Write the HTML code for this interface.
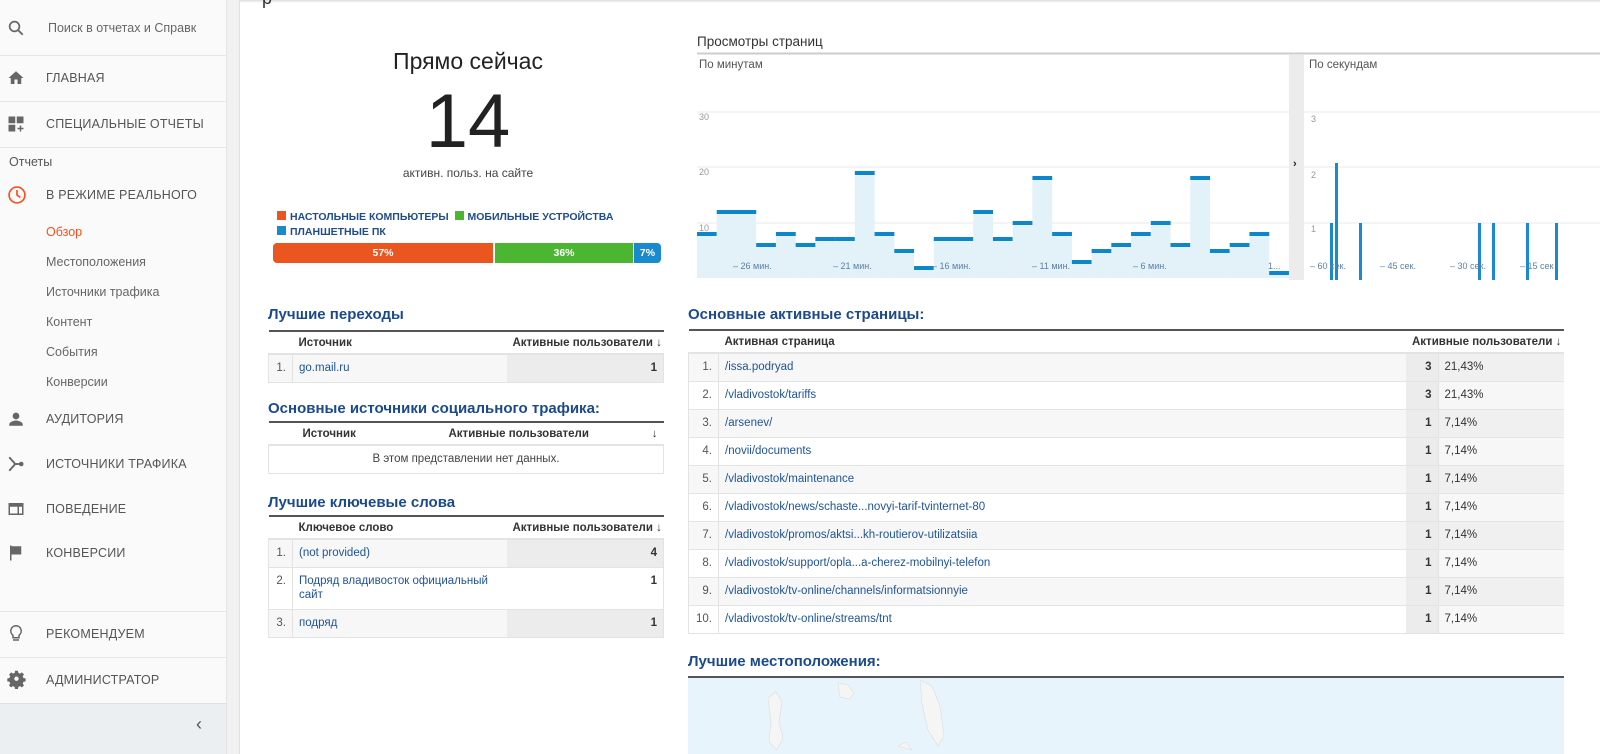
<!DOCTYPE html>
<html><head><meta charset="utf-8"><style>
*{margin:0;padding:0;box-sizing:border-box}
body{width:1600px;height:754px;overflow:hidden;background:#fff;font-family:"Liberation Sans",Roboto,sans-serif;position:relative;color:#333}
.a{position:absolute}
#side{left:0;top:0;width:227px;height:754px;background:#fafafa;border-right:1px solid #e4e4e4}
#strip{left:227px;top:0;width:13px;height:754px;background:#f1f1f1;border-right:1px solid #e0e0e0}
.sep{position:absolute;left:0;width:227px;height:1px;background:#e6e6e6}
.it{position:absolute;left:46px;font-size:12.5px;color:#555;text-transform:uppercase;letter-spacing:.2px;white-space:nowrap}
.sub{position:absolute;left:46px;font-size:12.5px;color:#666;white-space:nowrap}
.ic{position:absolute;left:7px}
h3{position:absolute;font-size:15px;font-weight:bold;color:#1b4a8c;white-space:nowrap}
table{position:absolute;border-collapse:collapse;font-size:11.5px;border-top:2px solid #555;table-layout:fixed}
td{height:28px;border-bottom:1px solid #e3e3e3;padding:0 6px;color:#333;white-space:nowrap;overflow:hidden}
th{height:23px;font-weight:bold;font-size:11.5px;text-align:left;padding:0 6px;border-bottom:2px solid #e3e3e3;white-space:nowrap}
.n{text-align:right;color:#555;border-right:1px solid #e3e3e3;border-left:1px solid #e3e3e3}
.l{color:#1f5397}
.v{background:#ececec;text-align:right;font-weight:bold;border-right:1px solid #e3e3e3}
.g{background:#f7f7f7}
</style></head><body>
<div id="side" class="a">
 <svg class="ic" style="top:19px" width="18" height="18" viewBox="0 0 24 24"><circle cx="10" cy="10" r="6.5" fill="none" stroke="#666" stroke-width="2.3"/><path d="M15 15l6 6" stroke="#666" stroke-width="2.5"/></svg>
 <div class="sub" style="left:48px;top:21px;color:#666">Поиск в отчетах и Справк</div>
 <div class="sep" style="top:55px"></div>
 <svg class="ic" style="top:69px" width="18" height="18" viewBox="0 0 24 24"><path d="M10 20v-6h4v6h5v-8h3L12 3 2 12h3v8z" fill="#666"/></svg>
 <div class="it" style="top:71px">Главная</div>
 <div class="sep" style="top:101px"></div>
 <svg class="ic" style="top:115px" width="18" height="18" viewBox="0 0 24 24"><path d="M2 2h9v9H2zM13 2h9v9h-9zM2 13h9v9H2zM17 14h2v3h3v2h-3v3h-2v-3h-3v-2h3z" fill="#666"/></svg>
 <div class="it" style="top:117px">Специальные отчеты</div>
 <div class="sep" style="top:147px"></div>
 <div class="sub" style="left:9px;top:155px;color:#555">Отчеты</div>
 <svg class="ic" style="top:185px" width="20" height="20" viewBox="0 0 24 24"><circle cx="12" cy="12" r="9.5" fill="none" stroke="#f4511e" stroke-width="2"/><path d="M12 6v6l4 3" fill="none" stroke="#f4511e" stroke-width="2"/></svg>
 <div class="it" style="top:188px">В режиме реального</div>
 <div class="sub" style="top:225px;color:#f4511e">Обзор</div>
 <div class="sub" style="top:255px">Местоположения</div>
 <div class="sub" style="top:285px">Источники трафика</div>
 <div class="sub" style="top:315px">Контент</div>
 <div class="sub" style="top:345px">События</div>
 <div class="sub" style="top:375px">Конверсии</div>
 <svg class="ic" style="top:410px" width="18" height="18" viewBox="0 0 24 24"><circle cx="12" cy="8" r="4.5" fill="#666"/><path d="M3 21v-2c0-3 6-5 9-5s9 2 9 5v2z" fill="#666"/></svg>
 <div class="it" style="top:412px">Аудитория</div>
 <svg class="ic" style="top:455px" width="18" height="18" viewBox="0 0 24 24"><path d="M3 3l8 9-8 9" fill="none" stroke="#666" stroke-width="2.5"/><path d="M10 12h8" stroke="#666" stroke-width="2.5"/><circle cx="19" cy="12" r="3" fill="#666"/></svg>
 <div class="it" style="top:457px">Источники трафика</div>
 <svg class="ic" style="top:500px" width="18" height="18" viewBox="0 0 24 24"><path d="M2 4h20v16H2z M4 9v9h10V9z M16 9v9h4V9z" fill="#666" fill-rule="evenodd"/></svg>
 <div class="it" style="top:502px">Поведение</div>
 <svg class="ic" style="top:544px" width="18" height="18" viewBox="0 0 24 24"><path d="M4 2h2v20H4zM6 3h13v11H6z" fill="#666"/></svg>
 <div class="it" style="top:546px">Конверсии</div>
 <div class="sep" style="top:611px"></div>
 <svg class="ic" style="top:624px" width="18" height="20" viewBox="0 0 24 26"><path d="M12 2a7 7 0 0 0-4 12.7V18h8v-3.3A7 7 0 0 0 12 2z" fill="none" stroke="#666" stroke-width="2"/><path d="M8 21h8" stroke="#666" stroke-width="2"/></svg>
 <div class="it" style="top:627px">Рекомендуем</div>
 <div class="sep" style="top:657px"></div>
 <svg class="ic" style="top:670px" width="19" height="19" viewBox="0 0 24 24"><path fill="#666" fill-rule="evenodd" d="M10 1h4l.6 3 2.3 1 2.6-1.7 2.8 2.8L20.6 8.7l1 2.3 3 .6v4l-3 .6-1 2.3 1.7 2.6-2.8 2.8-2.6-1.7-2.3 1-.6 3h-4l-.6-3-2.3-1-2.6 1.7-2.8-2.8 1.7-2.6-1-2.3-3-.6v-4l3-.6 1-2.3L1.9 6.1 4.7 3.3 7.3 5l2.3-1z M12 9a3 3 0 1 0 0 6 3 3 0 0 0 0-6z" transform="scale(.92) translate(1 0)"/></svg>
 <div class="it" style="top:673px">Администратор</div>
 <div class="a" style="left:0;top:703px;width:226px;height:51px;background:#eceff1;border-top:1px solid #e0e0e0"></div>
 <div class="a" style="left:196px;top:714px;font-size:18px;color:#555">‹</div>
</div>
<div id="strip" class="a"></div>
<div class="a" style="left:240px;top:0;width:1360px;height:3px;background:linear-gradient(#ddd,#fff)"></div>
<div class="a" style="left:262px;top:-12px;font-size:18px;color:#333">р</div>

<div class="a" style="left:268px;top:48px;width:400px;text-align:center;font-size:23px;color:#222">Прямо сейчас</div>
<div class="a" style="left:268px;top:78px;width:400px;text-align:center;font-size:76px;color:#222;font-weight:300">14</div>
<div class="a" style="left:268px;top:166px;width:400px;text-align:center;font-size:12px;color:#444">активн. польз. на сайте</div>
<div class="a" style="left:277px;top:210px;font-size:10.5px;font-weight:bold;color:#1f4c8a;line-height:15px;white-space:nowrap">
<span style="display:inline-block;width:9px;height:9px;background:#eb5620;margin-right:4px"></span>НАСТОЛЬНЫЕ КОМПЬЮТЕРЫ &nbsp;<span style="display:inline-block;width:9px;height:9px;background:#4cb633;margin-right:4px"></span>МОБИЛЬНЫЕ УСТРОЙСТВА<br>
<span style="display:inline-block;width:9px;height:9px;background:#1a8ace;margin-right:4px"></span>ПЛАНШЕТНЫЕ ПК</div>
<div class="a" style="left:273px;top:243px;width:388px;height:20px;display:flex;font-size:10.5px;font-weight:bold;color:#fff;line-height:20px;text-align:center;border-radius:4px;overflow:hidden">
<div style="width:220px;background:#eb5620">57%</div><div style="width:2px"></div><div style="width:138px;background:#4cb633">36%</div><div style="width:1px"></div><div style="width:27px;background:#1a8ace">7%</div></div>

<h3 style="left:268px;top:306px">Лучшие переходы</h3>
<table style="left:268px;top:330px;width:396px">
<colgroup><col style="width:24px"><col><col style="width:157px"></colgroup>
<tr><th></th><th>Источник</th><th style="text-align:right">Активные пользователи ↓</th></tr>
<tr class="g"><td class="n">1.</td><td class="l">go.mail.ru</td><td class="v">1</td></tr></table>

<h3 style="left:268px;top:400px">Основные источники социального трафика:</h3>
<table style="left:268px;top:421px;width:396px">
<colgroup><col style="width:24px"><col style="width:150px"><col><col style="width:24px"></colgroup>
<tr><th></th><th style="padding-left:10px">Источник</th><th>Активные пользователи</th><th style="text-align:right">↓</th></tr>
<tr><td colspan="4" style="text-align:center;color:#444;border-left:1px solid #e3e3e3;border-right:1px solid #e3e3e3">В этом представлении нет данных.</td></tr></table>

<h3 style="left:268px;top:494px">Лучшие ключевые слова</h3>
<table style="left:268px;top:515px;width:396px">
<colgroup><col style="width:24px"><col><col style="width:157px"></colgroup>
<tr><th></th><th>Ключевое слово</th><th style="text-align:right">Активные пользователи ↓</th></tr>
<tr class="g"><td class="n">1.</td><td class="l">(not provided)</td><td class="v">4</td></tr>
<tr><td class="n" style="vertical-align:top;padding-top:7px">2.</td><td class="l" style="height:42px;line-height:14px;white-space:normal">Подряд владивосток официальный сайт</td><td class="v" style="background:#fff;vertical-align:top;padding-top:7px">1</td></tr>
<tr class="g"><td class="n">3.</td><td class="l">подряд</td><td class="v">1</td></tr></table>

<div class="a" style="left:697px;top:34px;font-size:13.5px;color:#333">Просмотры страниц</div>
<svg class="a" style="left:690px;top:50px" width="910" height="230">
<line x1="7" y1="3.5" x2="910" y2="3.5" stroke="#ccc" stroke-width="2"/>
<rect x="599" y="5" width="15" height="225" fill="#ececec"/>
<g stroke="#e8e8e8"><line x1="7" x2="599" y1="62" y2="62"/><line x1="7" x2="599" y1="117" y2="117"/><line x1="7" x2="599" y1="173" y2="173"/><line x1="614" x2="910" y1="62" y2="62"/><line x1="614" x2="910" y1="117" y2="117"/><line x1="614" x2="910" y1="173" y2="173"/></g>
<text x="9" y="18" font-size="11.5" fill="#555" font-family="Liberation Sans">По минутам</text>
<text x="619" y="18" font-size="11.5" fill="#555" font-family="Liberation Sans">По секундам</text>
<g font-size="9" fill="#999" font-family="Liberation Sans"><text x="9" y="70">30</text><text x="9" y="125">20</text><text x="9" y="181">10</text><text x="621" y="72">3</text><text x="621" y="128">2</text><text x="621" y="182">1</text></g>
<g id="bars"></g>
<text x="603" y="117" font-size="11" font-weight="bold" fill="#222">›</text>
<g fill="#1a8ace"><rect x="640" y="173" width="3" height="57"/><rect x="645" y="113" width="3" height="117"/><rect x="669" y="173" width="3" height="57"/><rect x="788" y="173" width="3" height="57"/><rect x="802" y="173" width="3" height="57"/><rect x="836" y="173" width="3" height="57"/><rect x="865" y="173" width="3" height="57"/></g>
<g font-size="9" fill="#5a7fa8" font-family="Liberation Sans"><text x="43" y="219">– 26 мин.</text><text x="143" y="219">– 21 мин.</text><text x="242" y="219">– 16 мин.</text><text x="342" y="219">– 11 мин.</text><text x="443" y="219">– 6 мин.</text><text x="578" y="219">1...</text><text x="620" y="219">– 60 сек.</text><text x="690" y="219">– 45 сек.</text><text x="760" y="219">– 30 сек.</text><text x="830" y="219">– 15 сек</text></g>
</svg>
<script>
var t=[234,212,212,245,234,245,239,239,173,234,251,268,239,239,212,239,223,178,234,262,251,245,234,223,245,178,251,245,234,273];
var s='';for(var i=0;i<30;i++){var x=7+i*19.73,y=t[i]-50;s+='<rect x="'+x+'" y="'+y+'" width="19.8" height="'+(228-y)+'" fill="#e3f1f9"/><rect x="'+x+'" y="'+(y-2)+'" width="19.8" height="4" fill="#0d87c9"/>';}
document.getElementById('bars').innerHTML=s;
</script>

<h3 style="left:688px;top:306px">Основные активные страницы:</h3>
<table style="left:688px;top:329px;width:876px">
<colgroup><col style="width:30px"><col><col style="width:32px"><col style="width:126px"></colgroup>
<tr><th></th><th style="padding-left:6px">Активная страница</th><th colspan="2" style="text-align:right">Активные пользователи ↓</th></tr>
<tr class="g"><td class="n">1.</td><td class="l">/issa.podryad</td><td class="v">3</td><td style="background:#f0f0f0">21,43%</td></tr>
<tr><td class="n">2.</td><td class="l">/vladivostok/tariffs</td><td class="v">3</td><td style="background:#f7f7f7">21,43%</td></tr>
<tr class="g"><td class="n">3.</td><td class="l">/arsenev/</td><td class="v">1</td><td style="background:#f0f0f0">7,14%</td></tr>
<tr><td class="n">4.</td><td class="l">/novii/documents</td><td class="v">1</td><td style="background:#f7f7f7">7,14%</td></tr>
<tr class="g"><td class="n">5.</td><td class="l">/vladivostok/maintenance</td><td class="v">1</td><td style="background:#f0f0f0">7,14%</td></tr>
<tr><td class="n">6.</td><td class="l">/vladivostok/news/schaste...novyi-tarif-tvinternet-80</td><td class="v">1</td><td style="background:#f7f7f7">7,14%</td></tr>
<tr class="g"><td class="n">7.</td><td class="l">/vladivostok/promos/aktsi...kh-routierov-utilizatsiia</td><td class="v">1</td><td style="background:#f0f0f0">7,14%</td></tr>
<tr><td class="n">8.</td><td class="l">/vladivostok/support/opla...a-cherez-mobilnyi-telefon</td><td class="v">1</td><td style="background:#f7f7f7">7,14%</td></tr>
<tr class="g"><td class="n">9.</td><td class="l">/vladivostok/tv-online/channels/informatsionnyie</td><td class="v">1</td><td style="background:#f0f0f0">7,14%</td></tr>
<tr><td class="n">10.</td><td class="l">/vladivostok/tv-online/streams/tnt</td><td class="v">1</td><td style="background:#f7f7f7">7,14%</td></tr>
</table>

<h3 style="left:688px;top:653px">Лучшие местоположения:</h3>
<div class="a" style="left:688px;top:676px;width:876px;height:2px;background:#555"></div>
<div class="a" style="left:688px;top:678px;width:876px;height:76px;background:#e8f4fc"></div>
<svg class="a" style="left:688px;top:678px" width="876" height="76"><g fill="#f5f5f5" stroke="#ddd" stroke-width=".6"><path d="M80 20l8-6 6 10-3 20 4 16-6 12-8-8 2-20z"/><path d="M150 5l10 2 6 8-4 6-10-2z"/><path d="M232 2l12 6 8 20 4 30-6 10-10-16-6-26z"/><path d="M210 68l8-4 6 8z"/></g></svg>
</body></html>
